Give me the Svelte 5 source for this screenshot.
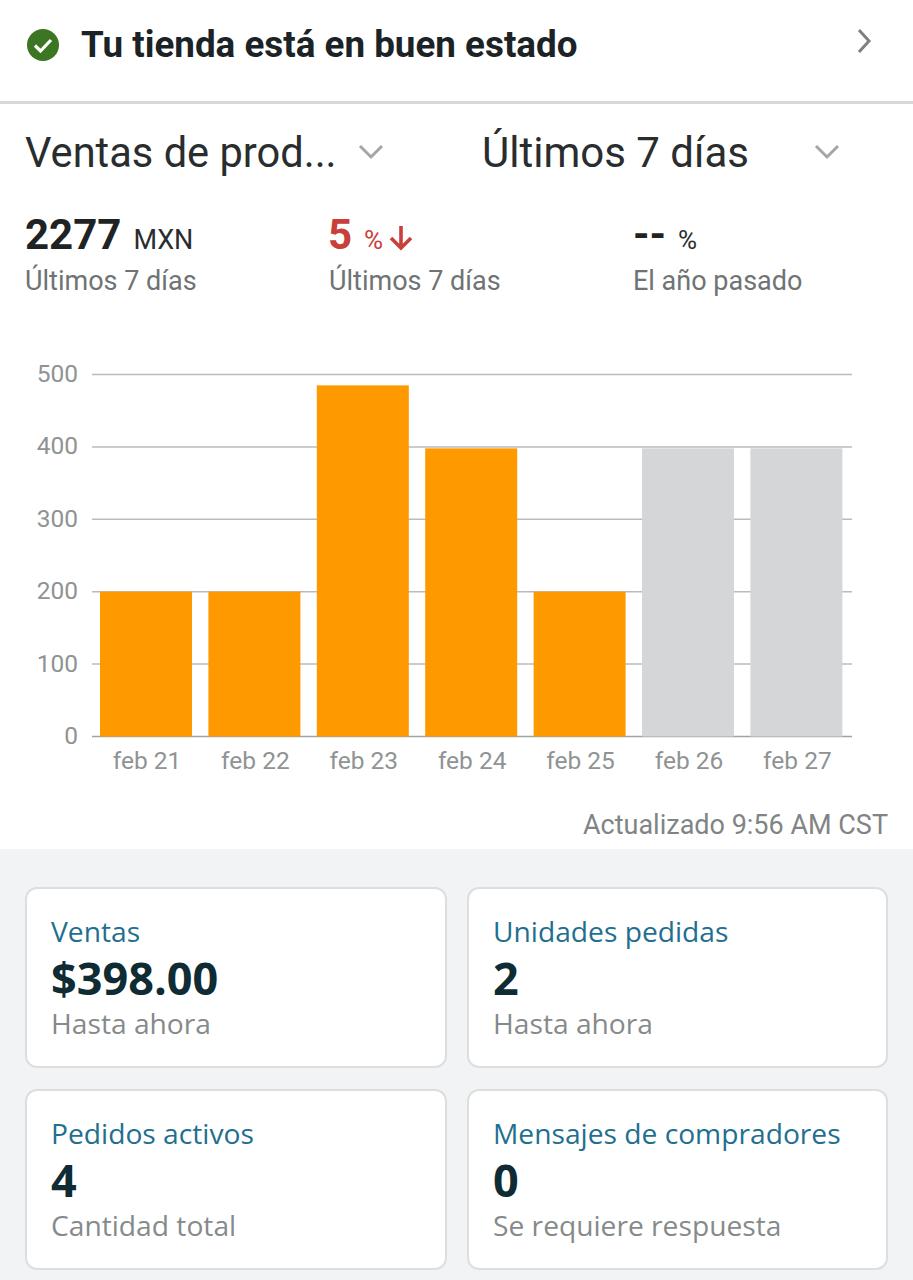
<script lang="ts">
	const ticks = [500, 400, 300, 200, 100, 0]
	const bars = [
		{ label: 'feb 21', value: 200, future: false },
		{ label: 'feb 22', value: 200, future: false },
		{ label: 'feb 23', value: 485, future: false },
		{ label: 'feb 24', value: 398, future: false },
		{ label: 'feb 25', value: 200, future: false },
		{ label: 'feb 26', value: 398, future: true },
		{ label: 'feb 27', value: 398, future: true }
	]
	const cards = [
		{ title: 'Ventas', value: '$398.00', note: 'Hasta ahora' },
		{ title: 'Unidades pedidas', value: '2', note: 'Hasta ahora' },
		{ title: 'Pedidos activos', value: '4', note: 'Cantidad total' },
		{ title: 'Mensajes de compradores', value: '0', note: 'Se requiere respuesta' }
	]

	const top = 374.5
	const base = 736.5
	const left = 92
	const right = 852
	const y = (v: number) => base - (v / 500) * (base - top)
	const barX = (i: number) => 100 + i * 108.4
</script>

<main>
	<header class="health">
		<svg class="check" viewBox="0 0 32 32" aria-hidden="true">
			<circle cx="16" cy="16" r="16" fill="#3c7523" />
			<path d="M8 16.5l5.5 5.5L24 11" fill="none" stroke="#fff" stroke-width="3.2" />
		</svg>
		<h1>Tu tienda está en buen estado</h1>
		<svg class="chevron-right" viewBox="0 0 16 26" aria-hidden="true">
			<path d="M3 2l10 11L3 24" fill="none" stroke="#7d8182" stroke-width="3" />
		</svg>
	</header>

	<section class="filters">
		<div class="filter first">
			<span>Ventas de prod...</span>
			<svg viewBox="0 0 26 16" aria-hidden="true"><path d="M2 2l11 11L24 2" fill="none" stroke="#a3a7a8" stroke-width="3" /></svg>
		</div>
		<div class="filter second">
			<span>Últimos 7 días</span>
			<svg viewBox="0 0 26 16" aria-hidden="true"><path d="M2 2l11 11L24 2" fill="none" stroke="#a3a7a8" stroke-width="3" /></svg>
		</div>
	</section>

	<section class="stats">
		<div class="stat">
			<div class="figure"><b>2277</b><small class="unit">MXN</small></div>
			<p>Últimos 7 días</p>
		</div>
		<div class="stat">
			<div class="figure down">
				<b>5</b><small class="pct">%</small>
				<svg viewBox="0 0 24 26" aria-hidden="true"><path d="M12 1v22M2 13l10 10 10-10" fill="none" stroke="#c9403a" stroke-width="3.6" /></svg>
			</div>
			<p>Últimos 7 días</p>
		</div>
		<div class="stat">
			<div class="figure"><b>--</b><small class="pct">%</small></div>
			<p>El año pasado</p>
		</div>
	</section>

	<svg class="chart" viewBox="0 340 913 450" aria-label="Ventas por día">
		{#each ticks as t}
			<line x1={left} x2={right} y1={y(t)} y2={y(t)} stroke={t === 0 ? '#9fa3a4' : '#b9bcbd'} stroke-width="1.5" />
			<text class="tick" x="78" y={y(t) + 7.5} text-anchor="end">{t}</text>
		{/each}
		{#each bars as b, i}
			<rect x={barX(i)} y={y(b.value)} width="92" height={base - y(b.value)} fill={b.future ? '#d5d6d8' : '#ff9900'} />
			<text class="tick day" x={barX(i) + 47} y="769" text-anchor="middle">{b.label}</text>
		{/each}
	</svg>

	<p class="updated">Actualizado 9:56 AM CST</p>

	<section class="cards">
		{#each cards as c}
			<article>
				<h2>{c.title}</h2>
				<strong>{c.value}</strong>
				<p>{c.note}</p>
			</article>
		{/each}
	</section>
</main>

<style>
	:global(body) {
		background: #fff;
	}

	main {
		width: 913px;
		height: 1280px;
		overflow: hidden;
		font-family: Roboto, sans-serif;
		color: #1f2324;
	}

	.health {
		display: flex;
		align-items: center;
		height: 89px;
		padding: 0 41px 12px 27px;
		border-bottom: 3px solid #d6d8d8;
	}

	.check {
		width: 32px;
		height: 32px;
		margin-right: 22px;
		margin-top: 1px;
	}

	h1 {
		flex: 1;
		margin: 0;
		font-size: 36.8px;
		font-weight: 700;
		color: #1b2326;
	}

	.chevron-right {
		width: 16px;
		height: 26px;
		margin-top: -7px;
	}

	.filters {
		display: flex;
		height: 96px;
		padding-left: 25px;
		align-items: center;
	}

	.filter {
		display: flex;
		align-items: center;
		font-size: 42px;
		color: #2a2d2e;
	}

	.filter svg {
		width: 26px;
		height: 16px;
	}

	.filter.first {
		width: 457px;
		font-size: 41.6px;
	}

	.filter.first svg {
		margin-left: 21px;
	}

	.filter.second svg {
		margin-left: 65px;
	}

	.stats {
		display: flex;
		padding: 10px 0 0 25px;
	}

	.stat {
		flex: none;
		width: 304px;
	}

	.figure {
		display: flex;
		align-items: baseline;
		height: 44px;
	}

	.figure b {
		font-size: 42px;
		font-weight: 700;
		color: #1f2324;
	}

	.figure.down {
		margin-left: -1px;
	}

	.figure.down b {
		color: #c9403a;
	}

	.figure.down .pct {
		color: #c9403a;
	}

	.figure.down svg {
		width: 24px;
		height: 26px;
		margin-left: 6px;
		transform: translateY(2px);
	}

	.unit {
		margin-left: 12px;
		font-size: 27px;
		color: #2a2d2e;
	}

	.pct {
		margin-left: 12px;
		font-size: 26px;
		color: #2a2d2e;
	}

	.stat p {
		margin: 11px 0 0;
		font-size: 27px;
		color: #6f7374;
	}

	.chart {
		display: block;
		width: 913px;
		height: 450px;
		margin-top: 43px;
	}

	.tick {
		font-family: Roboto, sans-serif;
		font-size: 24.5px;
		fill: #8f9394;
	}

	.updated {
		margin: 19px 0 0;
		height: 40px;
		padding-right: 25px;
		text-align: right;
		font-size: 27px;
		line-height: 32px;
		color: #808485;
	}

	.cards {
		display: grid;
		grid-template-columns: 422px 421px;
		grid-auto-rows: 181px;
		gap: 21px 20px;
		padding: 38px 25px 0;
		height: 431px;
		box-sizing: border-box;
		background: #f2f3f4;
		font-family: 'Open Sans', sans-serif;
	}

	article {
		box-sizing: border-box;
		padding: 24px 24px;
		background: #fff;
		border: 2px solid #dcdedf;
		border-radius: 12px;
	}

	h2 {
		margin: -1.5px 0 1.5px;
		font-size: 28.2px;
		font-weight: 400;
		line-height: 38px;
		color: #1f6f8f;
	}

	strong {
		display: block;
		font-size: 45px;
		font-weight: 700;
		line-height: 54px;
		color: #0f2b33;
	}

	article p {
		margin: -1.5px 0 0;
		font-size: 28.2px;
		line-height: 38px;
		color: #858a8b;
	}
</style>
